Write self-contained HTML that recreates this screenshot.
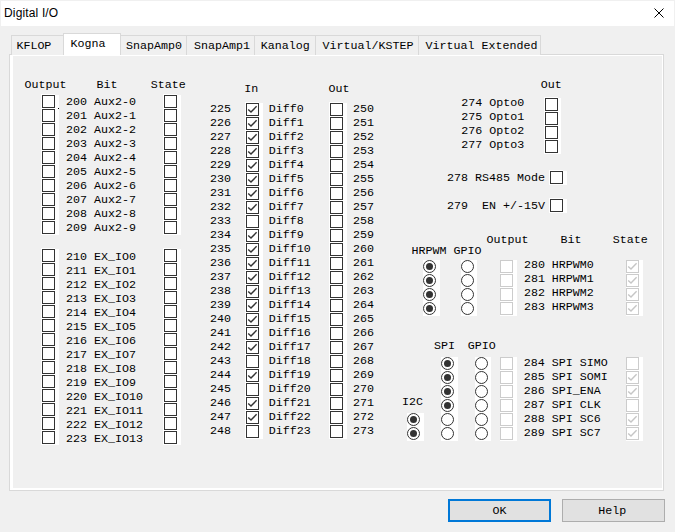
<!DOCTYPE html>
<html><head><meta charset="utf-8"><style>
html,body{margin:0;padding:0}
body{width:675px;height:532px;background:#f0f0f0;position:relative;overflow:hidden}
div{position:absolute;box-sizing:border-box}
.t{font-family:"Liberation Mono",monospace;font-size:11.67px;line-height:14px;white-space:pre;color:#000}
.w{background:#fff}
.cb{width:13px;height:13px;border:1px solid #333;background:#fff}
.cb.d{border-color:#ccc}
.cb svg{position:absolute;left:-1px;top:-1px}
.rb{width:13px;height:13px;border:1px solid #333;border-radius:50%;background:#fff}
.rb i{position:absolute;left:2px;top:2px;width:7px;height:7px;border-radius:50%;background:#333}
</style></head><body>

<div style="left:1px;top:1px;width:673px;height:25px;background:#fff"></div>
<div style="left:4px;top:6px;font-family:'Liberation Sans',sans-serif;font-size:12px;letter-spacing:0.15px;line-height:14px;white-space:pre;color:#000">Digital I/O</div>
<svg style="position:absolute;left:654px;top:8px" width="10" height="10" viewBox="0 0 10 10"><path d="M0.5 0.5L9.5 9.5M9.5 0.5L0.5 9.5" stroke="#000" stroke-width="1" fill="none"/></svg>
<div style="left:9px;top:54px;width:655px;height:437px;border:1px solid #d9d9d9;background:#fff"></div>
<div style="left:13px;top:56px;width:649px;height:432px;background:#f0f0f0"></div>
<div style="left:11px;top:35px;width:53px;height:20px;border:1px solid #d9d9d9;border-bottom:none;background:#f0f0f0"></div>
<div style="left:120px;top:35px;width:67px;height:20px;border:1px solid #d9d9d9;border-bottom:none;background:#f0f0f0"></div>
<div style="left:186px;top:35px;width:69px;height:20px;border:1px solid #d9d9d9;border-bottom:none;background:#f0f0f0"></div>
<div style="left:254px;top:35px;width:62px;height:20px;border:1px solid #d9d9d9;border-bottom:none;background:#f0f0f0"></div>
<div style="left:315px;top:35px;width:104px;height:20px;border:1px solid #d9d9d9;border-bottom:none;background:#f0f0f0"></div>
<div style="left:418px;top:35px;width:123px;height:20px;border:1px solid #d9d9d9;border-bottom:none;background:#f0f0f0"></div>
<div class="t" style="left:16.4px;top:39px">KFLOP</div>
<div class="t" style="left:126.1px;top:39px">SnapAmp0</div>
<div class="t" style="left:194.0px;top:39px">SnapAmp1</div>
<div class="t" style="left:260.7px;top:39px">Kanalog</div>
<div class="t" style="left:322.5px;top:39px">Virtual/KSTEP</div>
<div class="t" style="left:425.5px;top:39px">Virtual Extended</div>
<div style="left:63px;top:33px;width:58px;height:22px;border:1px solid #d9d9d9;border-bottom:none;background:#fff"></div>
<div style="left:64px;top:54px;width:56px;height:2px;background:#fff"></div>
<div class="t" style="left:70.6px;top:37px">Kogna</div>
<div style="left:448px;top:499px;width:103px;height:23px;border:2px solid #0078d7;background:#e1e1e1"></div>
<div style="left:562px;top:499px;width:103px;height:23px;border:1px solid #adadad;background:#e1e1e1"></div>
<div class="t" style="left:492.6px;top:504px">OK</div>
<div class="t" style="left:598.3px;top:504px">Help</div>
<div class="t" style="left:24.5px;top:78px">Output</div>
<div class="t" style="left:96.5px;top:78px">Bit</div>
<div class="t" style="left:150.8px;top:78px">State</div>
<div class="w" style="left:41px;top:94px;width:14px;height:141px"></div>
<div class="w" style="left:55px;top:95px;width:4px;height:140px"></div>
<div class="w" style="left:163px;top:94px;width:14px;height:141px"></div>
<div class="w" style="left:177px;top:95px;width:4px;height:140px"></div>
<div class="w" style="left:41px;top:248px;width:14px;height:197px"></div>
<div class="w" style="left:55px;top:249px;width:4px;height:196px"></div>
<div class="w" style="left:163px;top:248px;width:14px;height:197px"></div>
<div class="w" style="left:177px;top:249px;width:4px;height:196px"></div>
<div class="cb" style="left:42px;top:95px"></div>
<div class="cb" style="left:164px;top:95px"></div>
<div class="t" style="left:66.1px;top:95px">200 Aux2-0</div>
<div class="cb" style="left:42px;top:109px"></div>
<div class="cb" style="left:164px;top:109px"></div>
<div class="t" style="left:66.1px;top:109px">201 Aux2-1</div>
<div class="cb" style="left:42px;top:123px"></div>
<div class="cb" style="left:164px;top:123px"></div>
<div class="t" style="left:66.1px;top:123px">202 Aux2-2</div>
<div class="cb" style="left:42px;top:137px"></div>
<div class="cb" style="left:164px;top:137px"></div>
<div class="t" style="left:66.1px;top:137px">203 Aux2-3</div>
<div class="cb" style="left:42px;top:151px"></div>
<div class="cb" style="left:164px;top:151px"></div>
<div class="t" style="left:66.1px;top:151px">204 Aux2-4</div>
<div class="cb" style="left:42px;top:165px"></div>
<div class="cb" style="left:164px;top:165px"></div>
<div class="t" style="left:66.1px;top:165px">205 Aux2-5</div>
<div class="cb" style="left:42px;top:179px"></div>
<div class="cb" style="left:164px;top:179px"></div>
<div class="t" style="left:66.1px;top:179px">206 Aux2-6</div>
<div class="cb" style="left:42px;top:193px"></div>
<div class="cb" style="left:164px;top:193px"></div>
<div class="t" style="left:66.1px;top:193px">207 Aux2-7</div>
<div class="cb" style="left:42px;top:207px"></div>
<div class="cb" style="left:164px;top:207px"></div>
<div class="t" style="left:66.1px;top:207px">208 Aux2-8</div>
<div class="cb" style="left:42px;top:221px"></div>
<div class="cb" style="left:164px;top:221px"></div>
<div class="t" style="left:66.1px;top:221px">209 Aux2-9</div>
<div class="cb" style="left:42px;top:249px"></div>
<div class="cb" style="left:164px;top:249px"></div>
<div class="t" style="left:66.1px;top:250px">210 EX_IO0</div>
<div class="cb" style="left:42px;top:263px"></div>
<div class="cb" style="left:164px;top:263px"></div>
<div class="t" style="left:66.1px;top:264px">211 EX_IO1</div>
<div class="cb" style="left:42px;top:277px"></div>
<div class="cb" style="left:164px;top:277px"></div>
<div class="t" style="left:66.1px;top:278px">212 EX_IO2</div>
<div class="cb" style="left:42px;top:291px"></div>
<div class="cb" style="left:164px;top:291px"></div>
<div class="t" style="left:66.1px;top:292px">213 EX_IO3</div>
<div class="cb" style="left:42px;top:305px"></div>
<div class="cb" style="left:164px;top:305px"></div>
<div class="t" style="left:66.1px;top:306px">214 EX_IO4</div>
<div class="cb" style="left:42px;top:319px"></div>
<div class="cb" style="left:164px;top:319px"></div>
<div class="t" style="left:66.1px;top:320px">215 EX_IO5</div>
<div class="cb" style="left:42px;top:333px"></div>
<div class="cb" style="left:164px;top:333px"></div>
<div class="t" style="left:66.1px;top:334px">216 EX_IO6</div>
<div class="cb" style="left:42px;top:347px"></div>
<div class="cb" style="left:164px;top:347px"></div>
<div class="t" style="left:66.1px;top:348px">217 EX_IO7</div>
<div class="cb" style="left:42px;top:361px"></div>
<div class="cb" style="left:164px;top:361px"></div>
<div class="t" style="left:66.1px;top:362px">218 EX_IO8</div>
<div class="cb" style="left:42px;top:375px"></div>
<div class="cb" style="left:164px;top:375px"></div>
<div class="t" style="left:66.1px;top:376px">219 EX_IO9</div>
<div class="cb" style="left:42px;top:389px"></div>
<div class="cb" style="left:164px;top:389px"></div>
<div class="t" style="left:66.1px;top:390px">220 EX_IO10</div>
<div class="cb" style="left:42px;top:403px"></div>
<div class="cb" style="left:164px;top:403px"></div>
<div class="t" style="left:66.1px;top:404px">221 EX_IO11</div>
<div class="cb" style="left:42px;top:417px"></div>
<div class="cb" style="left:164px;top:417px"></div>
<div class="t" style="left:66.1px;top:418px">222 EX_IO12</div>
<div class="cb" style="left:42px;top:431px"></div>
<div class="cb" style="left:164px;top:431px"></div>
<div class="t" style="left:66.1px;top:432px">223 EX_IO13</div>
<div style="left:58px;top:108px;width:1px;height:1px;background:#000"></div>
<div class="t" style="left:244.2px;top:82px">In</div>
<div class="t" style="left:328.5px;top:82px">Out</div>
<div class="w" style="left:245px;top:102px;width:14px;height:337px"></div>
<div class="w" style="left:259px;top:103px;width:4px;height:336px"></div>
<div class="w" style="left:329px;top:102px;width:14px;height:337px"></div>
<div class="w" style="left:343px;top:103px;width:4px;height:336px"></div>
<div class="cb" style="left:246px;top:103px"><svg width="13" height="13" viewBox="0 0 13 13"><polyline points="2.2,6.5 5.0,9.1 10.6,3.3" fill="none" stroke="#333" stroke-width="1.4"/></svg></div>
<div class="cb" style="left:330px;top:103px"></div>
<div class="t" style="left:210.0px;top:102px">225</div>
<div class="t" style="left:268.8px;top:102px">Diff0</div>
<div class="t" style="left:353.0px;top:102px">250</div>
<div class="cb" style="left:246px;top:117px"><svg width="13" height="13" viewBox="0 0 13 13"><polyline points="2.2,6.5 5.0,9.1 10.6,3.3" fill="none" stroke="#333" stroke-width="1.4"/></svg></div>
<div class="cb" style="left:330px;top:117px"></div>
<div class="t" style="left:210.0px;top:116px">226</div>
<div class="t" style="left:268.8px;top:116px">Diff1</div>
<div class="t" style="left:353.0px;top:116px">251</div>
<div class="cb" style="left:246px;top:131px"><svg width="13" height="13" viewBox="0 0 13 13"><polyline points="2.2,6.5 5.0,9.1 10.6,3.3" fill="none" stroke="#333" stroke-width="1.4"/></svg></div>
<div class="cb" style="left:330px;top:131px"></div>
<div class="t" style="left:210.0px;top:130px">227</div>
<div class="t" style="left:268.8px;top:130px">Diff2</div>
<div class="t" style="left:353.0px;top:130px">252</div>
<div class="cb" style="left:246px;top:145px"><svg width="13" height="13" viewBox="0 0 13 13"><polyline points="2.2,6.5 5.0,9.1 10.6,3.3" fill="none" stroke="#333" stroke-width="1.4"/></svg></div>
<div class="cb" style="left:330px;top:145px"></div>
<div class="t" style="left:210.0px;top:144px">228</div>
<div class="t" style="left:268.8px;top:144px">Diff3</div>
<div class="t" style="left:353.0px;top:144px">253</div>
<div class="cb" style="left:246px;top:159px"><svg width="13" height="13" viewBox="0 0 13 13"><polyline points="2.2,6.5 5.0,9.1 10.6,3.3" fill="none" stroke="#333" stroke-width="1.4"/></svg></div>
<div class="cb" style="left:330px;top:159px"></div>
<div class="t" style="left:210.0px;top:158px">229</div>
<div class="t" style="left:268.8px;top:158px">Diff4</div>
<div class="t" style="left:353.0px;top:158px">254</div>
<div class="cb" style="left:246px;top:173px"><svg width="13" height="13" viewBox="0 0 13 13"><polyline points="2.2,6.5 5.0,9.1 10.6,3.3" fill="none" stroke="#333" stroke-width="1.4"/></svg></div>
<div class="cb" style="left:330px;top:173px"></div>
<div class="t" style="left:210.0px;top:172px">230</div>
<div class="t" style="left:268.8px;top:172px">Diff5</div>
<div class="t" style="left:353.0px;top:172px">255</div>
<div class="cb" style="left:246px;top:187px"><svg width="13" height="13" viewBox="0 0 13 13"><polyline points="2.2,6.5 5.0,9.1 10.6,3.3" fill="none" stroke="#333" stroke-width="1.4"/></svg></div>
<div class="cb" style="left:330px;top:187px"></div>
<div class="t" style="left:210.0px;top:186px">231</div>
<div class="t" style="left:268.8px;top:186px">Diff6</div>
<div class="t" style="left:353.0px;top:186px">256</div>
<div class="cb" style="left:246px;top:201px"><svg width="13" height="13" viewBox="0 0 13 13"><polyline points="2.2,6.5 5.0,9.1 10.6,3.3" fill="none" stroke="#333" stroke-width="1.4"/></svg></div>
<div class="cb" style="left:330px;top:201px"></div>
<div class="t" style="left:210.0px;top:200px">232</div>
<div class="t" style="left:268.8px;top:200px">Diff7</div>
<div class="t" style="left:353.0px;top:200px">257</div>
<div class="cb" style="left:246px;top:215px"></div>
<div class="cb" style="left:330px;top:215px"></div>
<div class="t" style="left:210.0px;top:214px">233</div>
<div class="t" style="left:268.8px;top:214px">Diff8</div>
<div class="t" style="left:353.0px;top:214px">258</div>
<div class="cb" style="left:246px;top:229px"><svg width="13" height="13" viewBox="0 0 13 13"><polyline points="2.2,6.5 5.0,9.1 10.6,3.3" fill="none" stroke="#333" stroke-width="1.4"/></svg></div>
<div class="cb" style="left:330px;top:229px"></div>
<div class="t" style="left:210.0px;top:228px">234</div>
<div class="t" style="left:268.8px;top:228px">Diff9</div>
<div class="t" style="left:353.0px;top:228px">259</div>
<div class="cb" style="left:246px;top:243px"><svg width="13" height="13" viewBox="0 0 13 13"><polyline points="2.2,6.5 5.0,9.1 10.6,3.3" fill="none" stroke="#333" stroke-width="1.4"/></svg></div>
<div class="cb" style="left:330px;top:243px"></div>
<div class="t" style="left:210.0px;top:242px">235</div>
<div class="t" style="left:268.8px;top:242px">Diff10</div>
<div class="t" style="left:353.0px;top:242px">260</div>
<div class="cb" style="left:246px;top:257px"><svg width="13" height="13" viewBox="0 0 13 13"><polyline points="2.2,6.5 5.0,9.1 10.6,3.3" fill="none" stroke="#333" stroke-width="1.4"/></svg></div>
<div class="cb" style="left:330px;top:257px"></div>
<div class="t" style="left:210.0px;top:256px">236</div>
<div class="t" style="left:268.8px;top:256px">Diff11</div>
<div class="t" style="left:353.0px;top:256px">261</div>
<div class="cb" style="left:246px;top:271px"><svg width="13" height="13" viewBox="0 0 13 13"><polyline points="2.2,6.5 5.0,9.1 10.6,3.3" fill="none" stroke="#333" stroke-width="1.4"/></svg></div>
<div class="cb" style="left:330px;top:271px"></div>
<div class="t" style="left:210.0px;top:270px">237</div>
<div class="t" style="left:268.8px;top:270px">Diff12</div>
<div class="t" style="left:353.0px;top:270px">262</div>
<div class="cb" style="left:246px;top:285px"><svg width="13" height="13" viewBox="0 0 13 13"><polyline points="2.2,6.5 5.0,9.1 10.6,3.3" fill="none" stroke="#333" stroke-width="1.4"/></svg></div>
<div class="cb" style="left:330px;top:285px"></div>
<div class="t" style="left:210.0px;top:284px">238</div>
<div class="t" style="left:268.8px;top:284px">Diff13</div>
<div class="t" style="left:353.0px;top:284px">263</div>
<div class="cb" style="left:246px;top:299px"><svg width="13" height="13" viewBox="0 0 13 13"><polyline points="2.2,6.5 5.0,9.1 10.6,3.3" fill="none" stroke="#333" stroke-width="1.4"/></svg></div>
<div class="cb" style="left:330px;top:299px"></div>
<div class="t" style="left:210.0px;top:298px">239</div>
<div class="t" style="left:268.8px;top:298px">Diff14</div>
<div class="t" style="left:353.0px;top:298px">264</div>
<div class="cb" style="left:246px;top:313px"><svg width="13" height="13" viewBox="0 0 13 13"><polyline points="2.2,6.5 5.0,9.1 10.6,3.3" fill="none" stroke="#333" stroke-width="1.4"/></svg></div>
<div class="cb" style="left:330px;top:313px"></div>
<div class="t" style="left:210.0px;top:312px">240</div>
<div class="t" style="left:268.8px;top:312px">Diff15</div>
<div class="t" style="left:353.0px;top:312px">265</div>
<div class="cb" style="left:246px;top:327px"><svg width="13" height="13" viewBox="0 0 13 13"><polyline points="2.2,6.5 5.0,9.1 10.6,3.3" fill="none" stroke="#333" stroke-width="1.4"/></svg></div>
<div class="cb" style="left:330px;top:327px"></div>
<div class="t" style="left:210.0px;top:326px">241</div>
<div class="t" style="left:268.8px;top:326px">Diff16</div>
<div class="t" style="left:353.0px;top:326px">266</div>
<div class="cb" style="left:246px;top:341px"><svg width="13" height="13" viewBox="0 0 13 13"><polyline points="2.2,6.5 5.0,9.1 10.6,3.3" fill="none" stroke="#333" stroke-width="1.4"/></svg></div>
<div class="cb" style="left:330px;top:341px"></div>
<div class="t" style="left:210.0px;top:340px">242</div>
<div class="t" style="left:268.8px;top:340px">Diff17</div>
<div class="t" style="left:353.0px;top:340px">267</div>
<div class="cb" style="left:246px;top:355px"></div>
<div class="cb" style="left:330px;top:355px"></div>
<div class="t" style="left:210.0px;top:354px">243</div>
<div class="t" style="left:268.8px;top:354px">Diff18</div>
<div class="t" style="left:353.0px;top:354px">268</div>
<div class="cb" style="left:246px;top:369px"><svg width="13" height="13" viewBox="0 0 13 13"><polyline points="2.2,6.5 5.0,9.1 10.6,3.3" fill="none" stroke="#333" stroke-width="1.4"/></svg></div>
<div class="cb" style="left:330px;top:369px"></div>
<div class="t" style="left:210.0px;top:368px">244</div>
<div class="t" style="left:268.8px;top:368px">Diff19</div>
<div class="t" style="left:353.0px;top:368px">269</div>
<div class="cb" style="left:246px;top:383px"></div>
<div class="cb" style="left:330px;top:383px"></div>
<div class="t" style="left:210.0px;top:382px">245</div>
<div class="t" style="left:268.8px;top:382px">Diff20</div>
<div class="t" style="left:353.0px;top:382px">270</div>
<div class="cb" style="left:246px;top:397px"><svg width="13" height="13" viewBox="0 0 13 13"><polyline points="2.2,6.5 5.0,9.1 10.6,3.3" fill="none" stroke="#333" stroke-width="1.4"/></svg></div>
<div class="cb" style="left:330px;top:397px"></div>
<div class="t" style="left:210.0px;top:396px">246</div>
<div class="t" style="left:268.8px;top:396px">Diff21</div>
<div class="t" style="left:353.0px;top:396px">271</div>
<div class="cb" style="left:246px;top:411px"><svg width="13" height="13" viewBox="0 0 13 13"><polyline points="2.2,6.5 5.0,9.1 10.6,3.3" fill="none" stroke="#333" stroke-width="1.4"/></svg></div>
<div class="cb" style="left:330px;top:411px"></div>
<div class="t" style="left:210.0px;top:410px">247</div>
<div class="t" style="left:268.8px;top:410px">Diff22</div>
<div class="t" style="left:353.0px;top:410px">272</div>
<div class="cb" style="left:246px;top:425px"></div>
<div class="cb" style="left:330px;top:425px"></div>
<div class="t" style="left:210.0px;top:424px">248</div>
<div class="t" style="left:268.8px;top:424px">Diff23</div>
<div class="t" style="left:353.0px;top:424px">273</div>
<div class="t" style="left:540.8px;top:78px">Out</div>
<div class="w" style="left:544px;top:97px;width:14px;height:57px"></div>
<div class="w" style="left:558px;top:98px;width:3px;height:56px"></div>
<div class="cb" style="left:545px;top:98px"></div>
<div class="t" style="left:461.2px;top:96px">274 Opto0</div>
<div class="cb" style="left:545px;top:112px"></div>
<div class="t" style="left:461.2px;top:110px">275 Opto1</div>
<div class="cb" style="left:545px;top:126px"></div>
<div class="t" style="left:461.2px;top:124px">276 Opto2</div>
<div class="cb" style="left:545px;top:140px"></div>
<div class="t" style="left:461.2px;top:138px">277 Opto3</div>
<div class="w" style="left:549px;top:170px;width:14px;height:15px"></div>
<div class="w" style="left:563px;top:171px;width:4px;height:14px"></div>
<div class="cb" style="left:550px;top:171px"></div>
<div class="t" style="left:447.1px;top:171px">278 RS485 Mode</div>
<div class="w" style="left:549px;top:198px;width:14px;height:15px"></div>
<div class="w" style="left:563px;top:199px;width:4px;height:14px"></div>
<div class="cb" style="left:550px;top:199px"></div>
<div class="t" style="left:447.1px;top:199px">279  EN +/-15V</div>
<div class="t" style="left:486.6px;top:233px">Output</div>
<div class="t" style="left:560.5px;top:233px">Bit</div>
<div class="t" style="left:612.8px;top:233px">State</div>
<div class="t" style="left:411.5px;top:244px">HRPWM</div>
<div class="t" style="left:453.6px;top:244px">GPIO</div>
<div class="w" style="left:423px;top:260px;width:17px;height:56px"></div>
<div class="w" style="left:461px;top:260px;width:16px;height:56px"></div>
<div class="w" style="left:500px;top:260px;width:17px;height:56px"></div>
<div class="w" style="left:626px;top:260px;width:17px;height:56px"></div>
<div class="rb" style="left:423.0px;top:260.0px"><i></i></div>
<div class="rb" style="left:461.0px;top:260.0px"></div>
<div class="cb d" style="left:500px;top:260px"></div>
<div class="cb d" style="left:626px;top:260px"><svg width="13" height="13" viewBox="0 0 13 13"><polyline points="2.2,6.5 5.0,9.1 10.6,3.3" fill="none" stroke="#c6c6c6" stroke-width="1.4"/></svg></div>
<div class="t" style="left:523.9px;top:258px">280 HRPWM0</div>
<div class="rb" style="left:423.0px;top:274.0px"><i></i></div>
<div class="rb" style="left:461.0px;top:274.0px"></div>
<div class="cb d" style="left:500px;top:274px"></div>
<div class="cb d" style="left:626px;top:274px"><svg width="13" height="13" viewBox="0 0 13 13"><polyline points="2.2,6.5 5.0,9.1 10.6,3.3" fill="none" stroke="#c6c6c6" stroke-width="1.4"/></svg></div>
<div class="t" style="left:523.9px;top:272px">281 HRPWM1</div>
<div class="rb" style="left:423.0px;top:288.0px"><i></i></div>
<div class="rb" style="left:461.0px;top:288.0px"></div>
<div class="cb d" style="left:500px;top:288px"></div>
<div class="cb d" style="left:626px;top:288px"><svg width="13" height="13" viewBox="0 0 13 13"><polyline points="2.2,6.5 5.0,9.1 10.6,3.3" fill="none" stroke="#c6c6c6" stroke-width="1.4"/></svg></div>
<div class="t" style="left:523.9px;top:286px">282 HRPWM2</div>
<div class="rb" style="left:423.0px;top:302.0px"><i></i></div>
<div class="rb" style="left:461.0px;top:302.0px"></div>
<div class="cb d" style="left:500px;top:302px"></div>
<div class="cb d" style="left:626px;top:302px"><svg width="13" height="13" viewBox="0 0 13 13"><polyline points="2.2,6.5 5.0,9.1 10.6,3.3" fill="none" stroke="#c6c6c6" stroke-width="1.4"/></svg></div>
<div class="t" style="left:523.9px;top:300px">283 HRPWM3</div>
<div class="t" style="left:433.9px;top:339px">SPI</div>
<div class="t" style="left:467.7px;top:339px">GPIO</div>
<div class="t" style="left:402.1px;top:395px">I2C</div>
<div class="w" style="left:441px;top:357px;width:17px;height:84px"></div>
<div class="w" style="left:475px;top:357px;width:16px;height:84px"></div>
<div class="w" style="left:500px;top:357px;width:17px;height:84px"></div>
<div class="w" style="left:626px;top:357px;width:17px;height:84px"></div>
<div class="w" style="left:407px;top:413px;width:17px;height:28px"></div>
<div class="rb" style="left:441.0px;top:357.0px"><i></i></div>
<div class="rb" style="left:475.0px;top:357.0px"></div>
<div class="cb d" style="left:500px;top:357px"></div>
<div class="cb d" style="left:626px;top:357px"></div>
<div class="t" style="left:523.7px;top:356px">284 SPI SIMO</div>
<div class="rb" style="left:441.0px;top:371.0px"><i></i></div>
<div class="rb" style="left:475.0px;top:371.0px"></div>
<div class="cb d" style="left:500px;top:371px"></div>
<div class="cb d" style="left:626px;top:371px"><svg width="13" height="13" viewBox="0 0 13 13"><polyline points="2.2,6.5 5.0,9.1 10.6,3.3" fill="none" stroke="#c6c6c6" stroke-width="1.4"/></svg></div>
<div class="t" style="left:523.7px;top:370px">285 SPI SOMI</div>
<div class="rb" style="left:441.0px;top:385.0px"><i></i></div>
<div class="rb" style="left:475.0px;top:385.0px"></div>
<div class="cb d" style="left:500px;top:385px"></div>
<div class="cb d" style="left:626px;top:385px"><svg width="13" height="13" viewBox="0 0 13 13"><polyline points="2.2,6.5 5.0,9.1 10.6,3.3" fill="none" stroke="#c6c6c6" stroke-width="1.4"/></svg></div>
<div class="t" style="left:523.7px;top:384px">286 SPI_ENA</div>
<div class="rb" style="left:441.0px;top:399.0px"><i></i></div>
<div class="rb" style="left:475.0px;top:399.0px"></div>
<div class="cb d" style="left:500px;top:399px"></div>
<div class="cb d" style="left:626px;top:399px"></div>
<div class="t" style="left:523.7px;top:398px">287 SPI CLK</div>
<div class="rb" style="left:441.0px;top:413.0px"></div>
<div class="rb" style="left:475.0px;top:413.0px"></div>
<div class="cb d" style="left:500px;top:413px"></div>
<div class="cb d" style="left:626px;top:413px"><svg width="13" height="13" viewBox="0 0 13 13"><polyline points="2.2,6.5 5.0,9.1 10.6,3.3" fill="none" stroke="#c6c6c6" stroke-width="1.4"/></svg></div>
<div class="t" style="left:523.7px;top:412px">288 SPI SC6</div>
<div class="rb" style="left:441.0px;top:427.0px"></div>
<div class="rb" style="left:475.0px;top:427.0px"></div>
<div class="cb d" style="left:500px;top:427px"></div>
<div class="cb d" style="left:626px;top:427px"><svg width="13" height="13" viewBox="0 0 13 13"><polyline points="2.2,6.5 5.0,9.1 10.6,3.3" fill="none" stroke="#c6c6c6" stroke-width="1.4"/></svg></div>
<div class="t" style="left:523.7px;top:426px">289 SPI SC7</div>
<div class="rb" style="left:407.0px;top:413.0px"><i></i></div>
<div class="rb" style="left:407.0px;top:427.0px"><i></i></div>
</body></html>
